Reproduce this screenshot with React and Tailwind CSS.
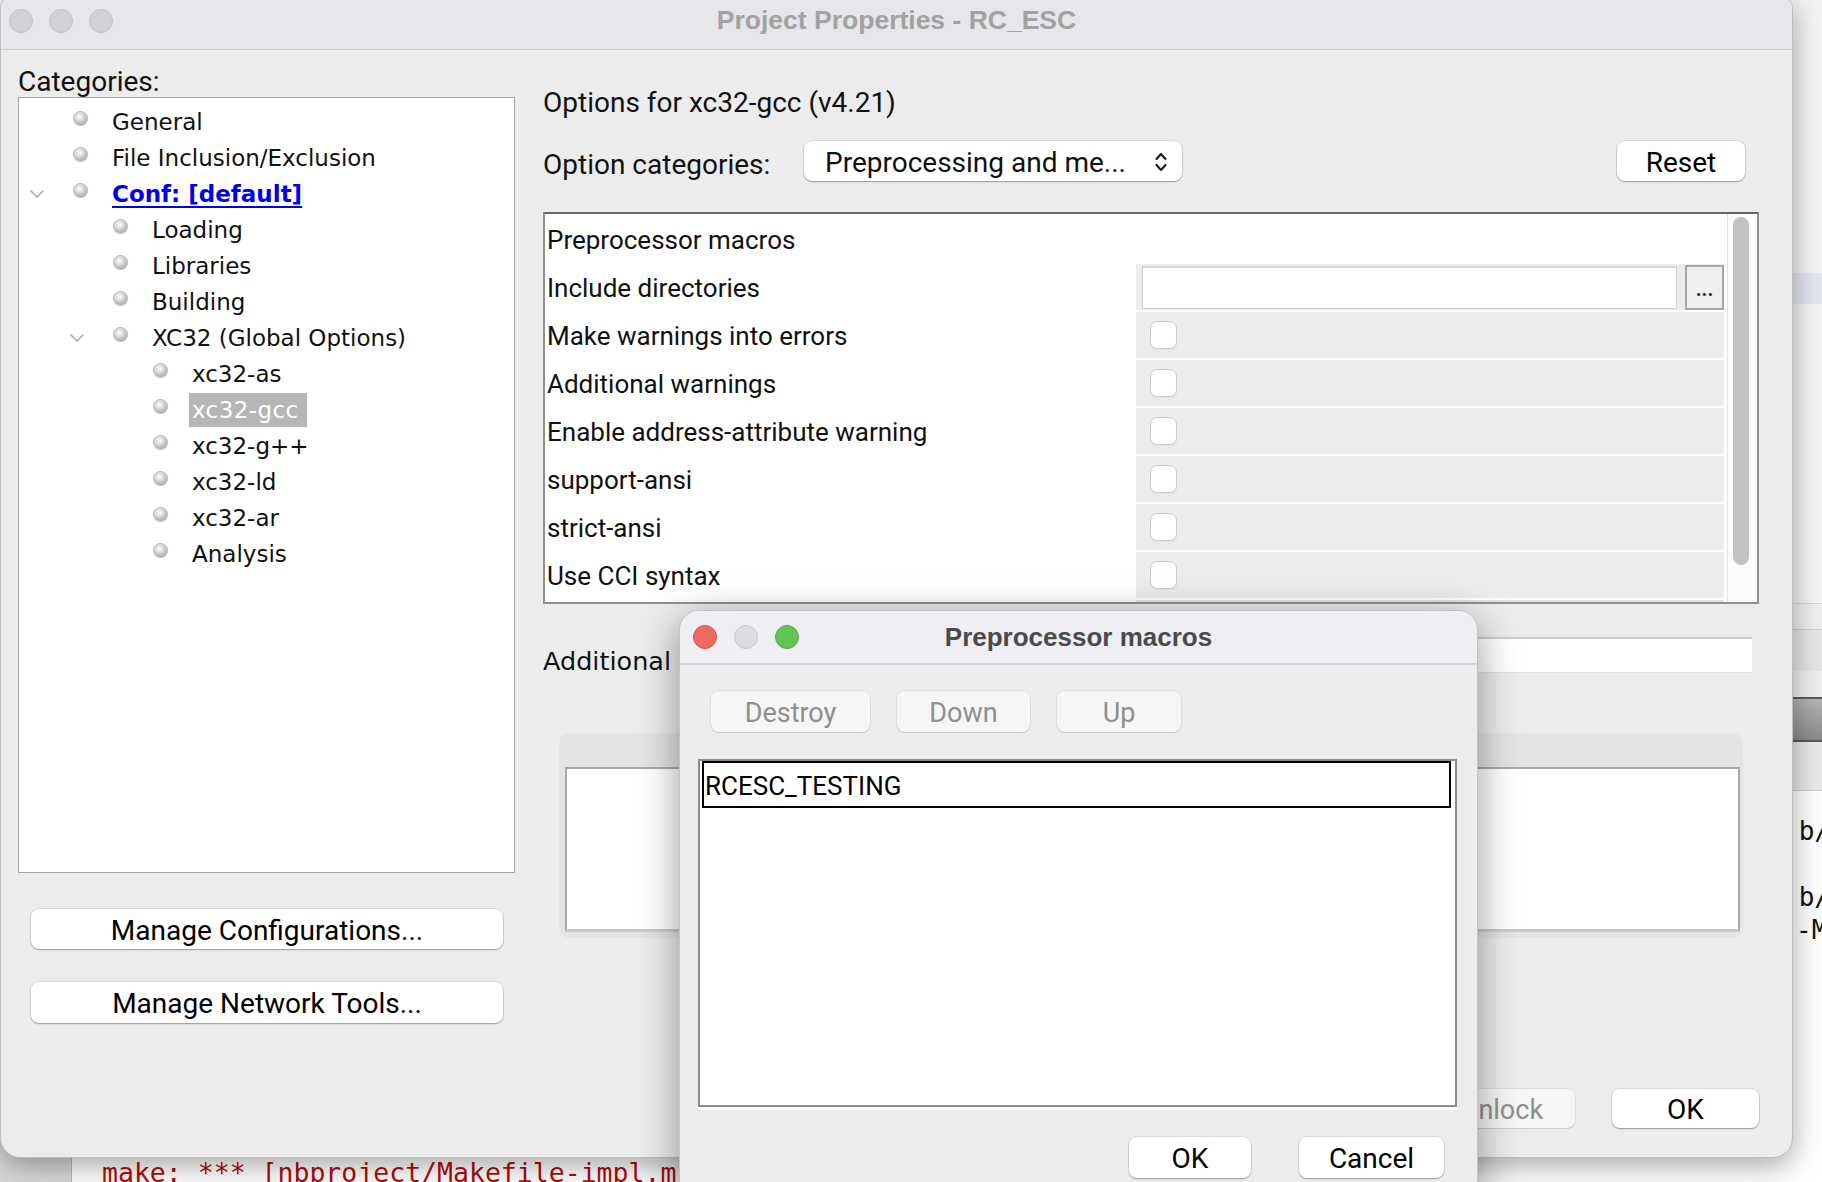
import React from 'react'

const ui = "font-['Roboto',sans-serif]"
const treeFont = "font-['DejaVu_Sans',sans-serif]"
const titleFont = "font-['Liberation_Sans',Arial,sans-serif]"
const mono = "font-['DejaVu_Sans_Mono',monospace]"

const btn = 'flex items-center justify-center rounded-[8px] bg-white pt-[3px] text-[28px] leading-none text-black shadow-[0_1px_1.5px_rgba(0,0,0,0.3),0_0_0_1px_rgba(0,0,0,0.07)]'
const btnOff = 'flex items-center justify-center rounded-[8px] bg-[#f6f6f6] pt-[3px] text-[27px] leading-none text-[#8f8f8f] shadow-[0_1px_1px_rgba(0,0,0,0.12),0_0_0_1px_rgba(0,0,0,0.05)]'

const tree = [
  { level: 0, text: 'General' },
  { level: 0, text: 'File Inclusion/Exclusion' },
  { level: 0, text: 'Conf: [default]', open: true, link: true },
  { level: 1, text: 'Loading' },
  { level: 1, text: 'Libraries' },
  { level: 1, text: 'Building' },
  { level: 1, text: 'XC32 (Global Options)', open: true },
  { level: 2, text: 'xc32-as' },
  { level: 2, text: 'xc32-gcc', selected: true },
  { level: 2, text: 'xc32-g++' },
  { level: 2, text: 'xc32-ld' },
  { level: 2, text: 'xc32-ar' },
  { level: 2, text: 'Analysis' },
]

const indent = { 0: 'pl-0', 1: 'pl-[40px]', 2: 'pl-[80px]' }

const options = [
  { label: 'Preprocessor macros', kind: 'none' },
  { label: 'Include directories', kind: 'field' },
  { label: 'Make warnings into errors', kind: 'check' },
  { label: 'Additional warnings', kind: 'check' },
  { label: 'Enable address-attribute warning', kind: 'check' },
  { label: 'support-ansi', kind: 'check' },
  { label: 'strict-ansi', kind: 'check' },
  { label: 'Use CCI syntax', kind: 'check' },
]

function Lights({ active }) {
  if (!active) {
    return (
      <div className="flex items-center gap-[16px]">
        <span className="block h-[24px] w-[24px] rounded-full border border-[#c2c1c6] bg-[#d3d2d7]" />
        <span className="block h-[24px] w-[24px] rounded-full border border-[#c2c1c6] bg-[#d3d2d7]" />
        <span className="block h-[24px] w-[24px] rounded-full border border-[#c2c1c6] bg-[#d3d2d7]" />
      </div>
    )
  }
  return (
    <div className="flex items-center gap-[17px]">
      <span className="block h-[24px] w-[24px] rounded-full border border-[#d9524a] bg-[#ee6a5f]" />
      <span className="block h-[24px] w-[24px] rounded-full border border-[#c8c7cc] bg-[#dcdbe0]" />
      <span className="block h-[24px] w-[24px] rounded-full border border-[#4fae44] bg-[#61c554]" />
    </div>
  )
}

function Bullet() {
  return (
    <span className="block h-[13px] w-[13px] -translate-y-[4px] rounded-full bg-[radial-gradient(circle_at_42%_35%,#ffffff_0%,#dadada_35%,#9c9c9c_85%,#858585_100%)] shadow-[0_0_0_1px_rgba(110,110,110,0.5)]" />
  )
}

function Chevron() {
  return (
    <svg width="16" height="10" viewBox="0 0 16 10">
      <polyline points="1.5,1.5 8,8 14.5,1.5" fill="none" stroke="#ababab" strokeWidth="1.6" />
    </svg>
  )
}

function TreeRow({ item }) {
  return (
    <div className={`flex h-[36px] items-center ${indent[item.level]}`}>
      <div className="flex w-[36px] justify-center">{item.open && <Chevron />}</div>
      <div className="ml-[19px]">
        <Bullet />
      </div>
      {item.selected ? (
        <span className="ml-[22px] bg-[#b6b6b6] pl-[3px] pr-[8px] leading-[34px] tracking-[0.4px] text-white">{item.text}</span>
      ) : item.link ? (
        <span className="ml-[25px] font-bold text-[#0000ee] underline decoration-[2px] underline-offset-[4px]">{item.text}</span>
      ) : (
        <span className="ml-[25px] text-[#111]">{item.text}</span>
      )}
    </div>
  )
}

function Checkbox() {
  return <span className="ml-[14px] block h-[28px] w-[27px] rounded-[7px] border border-[#cacaca] bg-white shadow-[0_1px_1px_rgba(0,0,0,0.06)]" />
}

function OptionRow({ row }) {
  return (
    <div className="flex h-[48px]">
      <div className="flex w-[591px] items-center pl-[2px] pt-[4px] text-[26px] text-[#111]">{row.label}</div>
      {row.kind === 'none' ? (
        <div className="w-[588px]" />
      ) : (
        <div className="flex w-[588px] items-center border-t-2 border-white bg-[#ececec]">
          {row.kind === 'check' ? (
            <Checkbox />
          ) : (
            <>
              <div className="ml-[6px] h-[43px] w-[535px] border border-[#cfcfcf] border-t-2 border-t-[#d8d8d8] bg-white" />
              <div className="ml-[8px] flex h-[45px] w-[39px] items-end justify-center border-2 border-[#a6a6a6] bg-[#efefef] pb-[9px] text-[20px] font-bold leading-none text-[#222]">...</div>
            </>
          )}
        </div>
      )}
    </div>
  )
}

function Backdrop() {
  return (
    <div className="flex h-full flex-col">
      <div className="h-[273px] shrink-0" />
      <div className="h-[31px] shrink-0 bg-[#e3e7f2]" />
      <div className="h-[299px] shrink-0" />
      <div className="h-[1px] shrink-0 bg-[#d6d6d6]" />
      <div className="h-[25px] shrink-0 bg-[#f0f0f0]" />
      <div className="h-[42px] shrink-0 border-t border-[#d0d0d0] bg-[#e6e6e6]" />
      <div className="h-[26px] shrink-0 bg-[#efefef]" />
      <div className="h-[45px] shrink-0 border-y-2 border-[#5a5a5a] bg-gradient-to-b from-[#b4b4b4] to-[#8a8a8a]" />
      <div className="h-[49px] shrink-0 border-b border-[#cdcdcd] bg-[#e9e9e9]" />
      <div className="flex flex-1">
        <div className="w-[72px] shrink-0 border-r border-[#b8b8b8] bg-[#d9d9d9]" />
        <div className={`flex-1 overflow-hidden bg-white pt-[24px] text-[26px] leading-[33px] whitespace-nowrap ${mono}`}>
          <div className="pl-[1711px] text-[#111]">.b/</div>
          <div className="h-[33px]" />
          <div className="pl-[1711px] text-[#111]">.b/</div>
          <div className="pl-[1724px] text-[#111]">-M</div>
          <div className="h-[209px]" />
          <div className="pl-[30px] text-[26.5px] text-[#b00d0d]">make: *** [nbproject/Makefile-impl.mk:39: .build-impl] Error 2</div>
        </div>
      </div>
    </div>
  )
}

function MainWindow() {
  return (
    <div className="absolute left-0 top-[-4px] flex h-[1162px] w-[1793px] flex-col overflow-hidden rounded-t-[12px] rounded-b-[20px] border border-[#bdbdbd] bg-[#ececec] shadow-[0_8px_30px_rgba(0,0,0,0.35)]">
      <div className="grid h-[53px] shrink-0 grid-cols-[1fr_auto_1fr] items-center border-b border-[#cfcfcf] bg-[#e7e6ea] pb-[4px]">
        <div className="pl-[8px]">
          <Lights />
        </div>
        <div className={`text-[26.5px] font-bold text-[#a2a2a2] ${titleFont}`}>Project Properties - RC_ESC</div>
        <div />
      </div>

      <div className="flex flex-1">
        <div className="ml-[17px] flex w-[497px] shrink-0 flex-col">
          <div className="mt-[17px] text-[28px] leading-[30px] text-[#111]">Categories:</div>
          <div className={`h-[776px] border border-[#a5a5a5] bg-white pt-[6px] text-[23px] ${treeFont}`}>
            {tree.map((item) => (
              <TreeRow key={item.text} item={item} />
            ))}
          </div>
          <button className={`ml-[13px] mt-[36px] h-[40px] w-[472px] ${btn}`}>Manage Configurations...</button>
          <button className={`ml-[13px] mt-[33px] h-[41px] w-[472px] ${btn}`}>Manage Network Tools...</button>
        </div>

        <div className="ml-[28px] flex w-[1216px] shrink-0 flex-col">
          <div className="mt-[34px] pt-[2px] text-[28px] leading-[34px] text-[#111]">Options for xc32-gcc (v4.21)</div>
          <div className="mt-[21px] flex h-[40px] items-center">
            <div className="w-[261px] pt-[7px] text-[28px] text-[#111]">Option categories:</div>
            <div className="flex h-full w-[378px] items-center justify-between rounded-[8px] bg-white pl-[21px] pr-[14px] pt-[3px] text-[28px] text-[#111] shadow-[0_1px_1.5px_rgba(0,0,0,0.3),0_0_0_1px_rgba(0,0,0,0.07)]">
              <span>Preprocessing and me...</span>
              <svg width="14" height="26" viewBox="0 0 14 26" className="-translate-y-[1px]">
                <path d="M2.5 10 L7 5 L11.5 10 M2.5 16 L7 21 L11.5 16" fill="none" stroke="#1e1e1e" strokeWidth="2.2" strokeLinecap="round" strokeLinejoin="round" />
              </svg>
            </div>
            <button className={`ml-auto mr-[14px] h-full w-[128px] ${btn}`}>Reset</button>
          </div>

          <div className="mt-[31px] flex h-[392px] border-2 border-[#8f8f8f] border-t-[#666] bg-white">
            <div className="flex w-[1179px] flex-col overflow-hidden">
              {options.map((row) => (
                <OptionRow key={row.label} row={row} />
              ))}
              <div className="flex h-[4px]">
                <div className="w-[591px]" />
                <div className="w-[588px] border-t-2 border-white bg-[#e2e2e2]" />
              </div>
            </div>
            <div className="ml-[3px] w-[30px] border-l border-[#e4e4e4] bg-[#fbfbfb] pt-[3px]">
              <div className="ml-[5px] h-[348px] w-[16px] rounded-full bg-[#c2c2c2]" />
            </div>
          </div>

          <div className="mt-[33px] flex h-[36px] items-center">
            <span className={`pt-[12px] text-[25.5px] text-[#111] ${treeFont}`}>Additional options:</span>
            <div className="ml-[20px] mr-[7px] h-full flex-1 border-t-2 border-[#cdcdcd] border-b border-b-[#e2e2e2] bg-white" />
          </div>

          <div className="mx-[16px] mt-[60px] h-[205px] rounded-[10px] bg-[#e4e4e4] pb-[6px] pl-[6px] pr-[3px] pt-[34px]">
            <div className="h-full border-2 border-[#a9a9a9] border-b-[3px] border-b-[#cbcbcb] bg-white" />
          </div>

          <div className="mt-[151px] flex h-[39px] justify-end gap-[37px]">
            <button className={`w-[146px] ${btnOff}`}>Unlock</button>
            <button className={`w-[147px] ${btn}`}>OK</button>
          </div>
        </div>
      </div>
    </div>
  )
}

function MacrosDialog() {
  return (
    <div className="absolute left-[679px] top-[610px] flex h-[600px] w-[799px] flex-col overflow-hidden rounded-t-[20px] border border-[#c4c4c4] bg-[#ececec] shadow-[0_10px_40px_rgba(0,0,0,0.4)]">
      <div className="grid h-[54px] shrink-0 grid-cols-[1fr_auto_1fr] items-center border-b-2 border-[#d5d4d8] bg-[#efeef2]">
        <div className="pl-[13px]">
          <Lights active />
        </div>
        <div className={`text-[26px] font-bold text-[#4a4a4a] ${titleFont}`}>Preprocessor macros</div>
        <div />
      </div>
      <div className="mt-[26px] flex h-[41px] gap-[27px] pl-[31px]">
        <button className={`w-[159px] ${btnOff}`}>Destroy</button>
        <button className={`w-[133px] ${btnOff}`}>Down</button>
        <button className={`w-[124px] ${btnOff}`}>Up</button>
      </div>
      <div className="ml-[18px] mt-[27px] h-[348px] w-[759px] border-2 border-[#8c8c8c] bg-white pl-[2px] pr-[4px] shadow-[0_3px_0_#fafafa]">
        <div className="flex h-[47px] items-center border-2 border-black pl-[1px] pt-[4px] text-[26px] text-black">RCESC_TESTING</div>
      </div>
      <div className="mt-[30px] flex h-[41px] justify-end gap-[48px] pr-[33px]">
        <button className={`w-[122px] ${btn}`}>OK</button>
        <button className={`w-[145px] ${btn}`}>Cancel</button>
      </div>
    </div>
  )
}

export default function App() {
  return (
    <div className={`relative h-[1182px] w-[1822px] overflow-hidden bg-[#f4f4f4] ${ui}`}>
      <Backdrop />
      <MainWindow />
      <MacrosDialog />
    </div>
  )
}
